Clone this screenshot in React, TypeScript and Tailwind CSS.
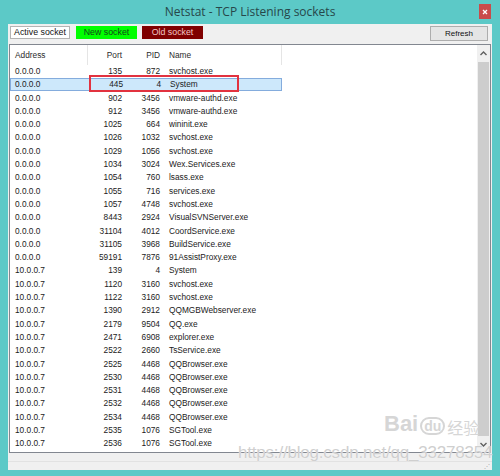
import { ReactNode } from "react";

type Row = { addr: string; port: number; pid: number; name: string; selected?: boolean };

const rows: Row[] = [
  { addr: "0.0.0.0", port: 135, pid: 872, name: "svchost.exe" },
  { addr: "0.0.0.0", port: 445, pid: 4, name: "System", selected: true },
  { addr: "0.0.0.0", port: 902, pid: 3456, name: "vmware-authd.exe" },
  { addr: "0.0.0.0", port: 912, pid: 3456, name: "vmware-authd.exe" },
  { addr: "0.0.0.0", port: 1025, pid: 664, name: "wininit.exe" },
  { addr: "0.0.0.0", port: 1026, pid: 1032, name: "svchost.exe" },
  { addr: "0.0.0.0", port: 1029, pid: 1056, name: "svchost.exe" },
  { addr: "0.0.0.0", port: 1034, pid: 3024, name: "Wex.Services.exe" },
  { addr: "0.0.0.0", port: 1054, pid: 760, name: "lsass.exe" },
  { addr: "0.0.0.0", port: 1055, pid: 716, name: "services.exe" },
  { addr: "0.0.0.0", port: 1057, pid: 4748, name: "svchost.exe" },
  { addr: "0.0.0.0", port: 8443, pid: 2924, name: "VisualSVNServer.exe" },
  { addr: "0.0.0.0", port: 31104, pid: 4012, name: "CoordService.exe" },
  { addr: "0.0.0.0", port: 31105, pid: 3968, name: "BuildService.exe" },
  { addr: "0.0.0.0", port: 59191, pid: 7876, name: "91AssistProxy.exe" },
  { addr: "10.0.0.7", port: 139, pid: 4, name: "System" },
  { addr: "10.0.0.7", port: 1120, pid: 3160, name: "svchost.exe" },
  { addr: "10.0.0.7", port: 1122, pid: 3160, name: "svchost.exe" },
  { addr: "10.0.0.7", port: 1390, pid: 2912, name: "QQMGBWebserver.exe" },
  { addr: "10.0.0.7", port: 2179, pid: 9504, name: "QQ.exe" },
  { addr: "10.0.0.7", port: 2471, pid: 6908, name: "explorer.exe" },
  { addr: "10.0.0.7", port: 2522, pid: 2660, name: "TsService.exe" },
  { addr: "10.0.0.7", port: 2525, pid: 4468, name: "QQBrowser.exe" },
  { addr: "10.0.0.7", port: 2530, pid: 4468, name: "QQBrowser.exe" },
  { addr: "10.0.0.7", port: 2531, pid: 4468, name: "QQBrowser.exe" },
  { addr: "10.0.0.7", port: 2532, pid: 4468, name: "QQBrowser.exe" },
  { addr: "10.0.0.7", port: 2534, pid: 4468, name: "QQBrowser.exe" },
  { addr: "10.0.0.7", port: 2535, pid: 1076, name: "SGTool.exe" },
  { addr: "10.0.0.7", port: 2536, pid: 1076, name: "SGTool.exe" },
];

const cols = "grid grid-cols-[78px_38px_39px_117px]";

function Label({ className, children }: { className: string; children: ReactNode }) {
  return (
    <div className={`flex h-[13px] w-[61px] items-center justify-center text-[8.8px] leading-none ${className}`}>
      {children}
    </div>
  );
}

function ScrollBar() {
  return (
    <div className="flex w-[13px] flex-col bg-[#f0f0f0]">
      <div className="flex h-[17px] items-center justify-center">
        <svg width="7" height="5" viewBox="0 0 7 5">
          <path d="M0.5 4 L3.5 1 L6.5 4" fill="none" stroke="#606060" strokeWidth="1.4" />
        </svg>
      </div>
      <div className="mx-[1px] flex-1 bg-[#cdcdcd]" />
      <div className="flex h-[16px] items-center justify-center">
        <svg width="7" height="5" viewBox="0 0 7 5">
          <path d="M0.5 1 L3.5 4 L6.5 1" fill="none" stroke="#606060" strokeWidth="1.4" />
        </svg>
      </div>
    </div>
  );
}

export default function App() {
  return (
    <div
      className="relative flex h-[476px] w-[500px] flex-col overflow-hidden bg-[#5cc9c7]"
      style={{ fontFamily: '"Liberation Sans", Arial, sans-serif' }}
    >
      {/* title bar */}
      <div className="relative flex h-[24px] items-center justify-center">
        <span className="text-[12px] text-[#27474a]" style={{ fontFamily: '"Open Sans", "Liberation Sans", sans-serif' }}>
          Netstat - TCP Listening sockets
        </span>
        <div className="absolute right-[9px] top-[4px] flex h-[15px] w-[12px] items-center justify-center bg-[#c94b4b]">
          <svg width="6" height="6" viewBox="0 0 6 6">
            <path d="M1 1 L5 5 M5 1 L1 5" stroke="#fff" strokeWidth="1.3" />
          </svg>
        </div>
      </div>

      <div className="mx-[8px] mb-[6px] flex flex-1 flex-col bg-[#f0f0f0]">
        {/* toolbar */}
        <div className="flex h-[20px] items-start pt-[2px] pl-[2px] pr-[4px]">
          <div className="flex h-[13px] w-[60px] items-center justify-center border border-[#b4b4b4] bg-white text-[8.8px] leading-none text-[#111]">
            Active socket
          </div>
          <Label className="ml-[6px] bg-[#00ff00] text-[#14461a]">New socket</Label>
          <Label className="ml-[5px] bg-[#800000] text-[#f3c6c6]">Old socket</Label>
          <div className="ml-auto flex h-[15px] w-[58px] items-center justify-center border border-[#adadad] bg-[#e5e5e5] text-[8px] text-[#111]">
            Refresh
          </div>
        </div>

        {/* list */}
        <div className="mx-[1px] flex h-[409px] border border-[#828790] bg-white">
          <div className="relative flex-1 text-[8.3px] leading-none text-[#1b1b1b]">
            <div className={`${cols} h-[19.5px] items-center text-[#2b2b2b]`}>
              <div className="flex h-full items-center border-r border-[#e5e5e5] pl-[5px]">Address</div>
              <div className="pr-[4px] text-right">Port</div>
              <div className="pr-[5px] text-right">PID</div>
              <div className="flex h-full items-center border-r border-[#e5e5e5] pl-[4px]">Name</div>
            </div>
            {rows.map((r) => (
              <div
                key={r.addr + r.port}
                className={`${cols} h-[13.3px] w-[272px] items-center ${
                  r.selected ? "border border-[#84acdd] bg-[#cde8fb]" : ""
                }`}
              >
                <div className={r.selected ? "pl-[4px]" : "pl-[5px]"}>{r.addr}</div>
                <div className="pr-[4px] text-right">{r.port}</div>
                <div className="pr-[5px] text-right">{r.pid}</div>
                <div className="pl-[4px]">{r.name}</div>
              </div>
            ))}
            {/* red annotation box */}
            <div className="absolute left-[79px] top-[30px] h-[17px] w-[150px] border-2 border-[#e2323f]" />
          </div>
          <ScrollBar />
        </div>

        {/* status strip */}
        <div className="flex flex-1 flex-col">
          <div className="mt-[8px] h-px bg-[#e2e2e2]" />
          <div className="flex flex-1 justify-end pr-[2px]">
            <div className="mt-auto mb-[1px] text-[6px] leading-none text-[#a0a0a0]">⋰</div>
          </div>
        </div>
      </div>

      {/* watermark */}
      <div className="pointer-events-none absolute left-[384px] top-[413px] flex items-end gap-[2px] text-[#d6d6d6]">
        <span className="text-[22px] font-bold leading-none">Bai</span>
        <span className="rounded-full border-2 border-[#d6d6d6] px-[2px] text-[14px] font-bold leading-none">du</span>
        <span className="text-[16px] leading-none" style={{ fontFamily: '"Noto Sans CJK SC", sans-serif' }}>
          经验
        </span>
      </div>
      <div
        className="pointer-events-none absolute left-[238px] top-[444px] text-[17px] leading-none tracking-[-0.2px] text-[#cfcfcf]"
        style={{ textShadow: "0 0 1px #ffffff" }}
      >
        https://blog.csdn.net/qq_33278354
      </div>
    </div>
  );
}
